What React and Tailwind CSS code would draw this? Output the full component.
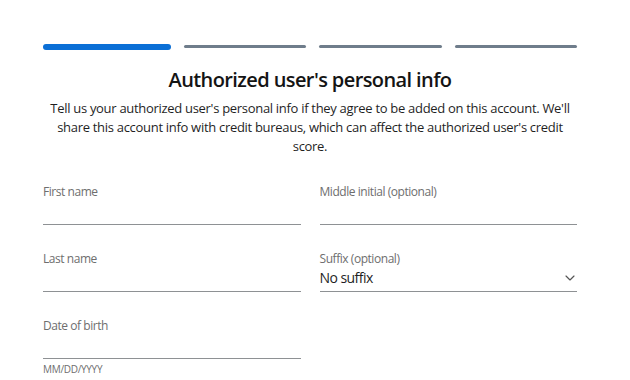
import { ChevronDown } from 'lucide-react';

// Einzelnes Eingabefeld mit Unterstrich
function Field({ label, value, select, helper }) {
  return (
    <div>
      <label className="block text-[12px] leading-[16px] tracking-[-0.45px] text-[#6e6e6e]">{label}</label>
      <div className="flex h-[25px] items-center justify-between border-b border-[#8e9194] pb-[3px]">
        <span className="text-[14px] leading-[20px] tracking-[-0.55px] text-[#1f1f1f]">{value}</span>
        {select && <ChevronDown size={16} strokeWidth={1.75} className="mr-[-1px] text-[#555]" />}
      </div>
      {helper && <p className="mt-[3px] text-[10px] leading-[14px] tracking-[-0.3px] text-[#6e6e6e]">{helper}</p>}
    </div>
  );
}

export default function App() {
  return (
    <div className="h-[380px] w-[630px] overflow-hidden bg-white pl-[43px] pr-[53px] font-['Open_Sans',sans-serif]">
      {/* abgeschnittener Text oben */}
      <p className="-mt-[16px] h-[20px] text-center text-[14px] leading-[20px] text-[#dcdcdc]">Add an authorized user</p>

      {/* Fortschrittsbalken */}
      <div className="mt-[39px] flex h-[7px] items-center gap-[13px]">
        <div className="h-[6px] w-[128px] rounded-full bg-[#0b6fd6]" />
        <div className="h-[3px] flex-1 rounded-full bg-[#6f7d8b]" />
        <div className="h-[3px] flex-1 rounded-full bg-[#6f7d8b]" />
        <div className="h-[3px] flex-1 rounded-full bg-[#6f7d8b]" />
      </div>

      <h2 className="mt-[16px] text-center text-[20px] font-semibold leading-[28px] tracking-[-0.6px] text-[#141414]">
        Authorized user's personal info
      </h2>
      <p className="mt-[5px] text-center text-[13px] leading-[19px] tracking-[-0.3px] text-[#1f1f1f]">
        Tell us your authorized user's personal info if they agree to be added on this account. We'll share this account info with credit bureaus, which can affect the authorized user's credit score.
      </p>

      <div className="mt-[28px] grid grid-cols-2 gap-x-[19px] gap-y-[26px]">
        <Field label="First name" />
        <Field label="Middle initial (optional)" />
        <Field label="Last name" />
        <Field label="Suffix (optional)" value="No suffix" select />
        <Field label="Date of birth" helper="MM/DD/YYYY" />
      </div>
    </div>
  );
}
